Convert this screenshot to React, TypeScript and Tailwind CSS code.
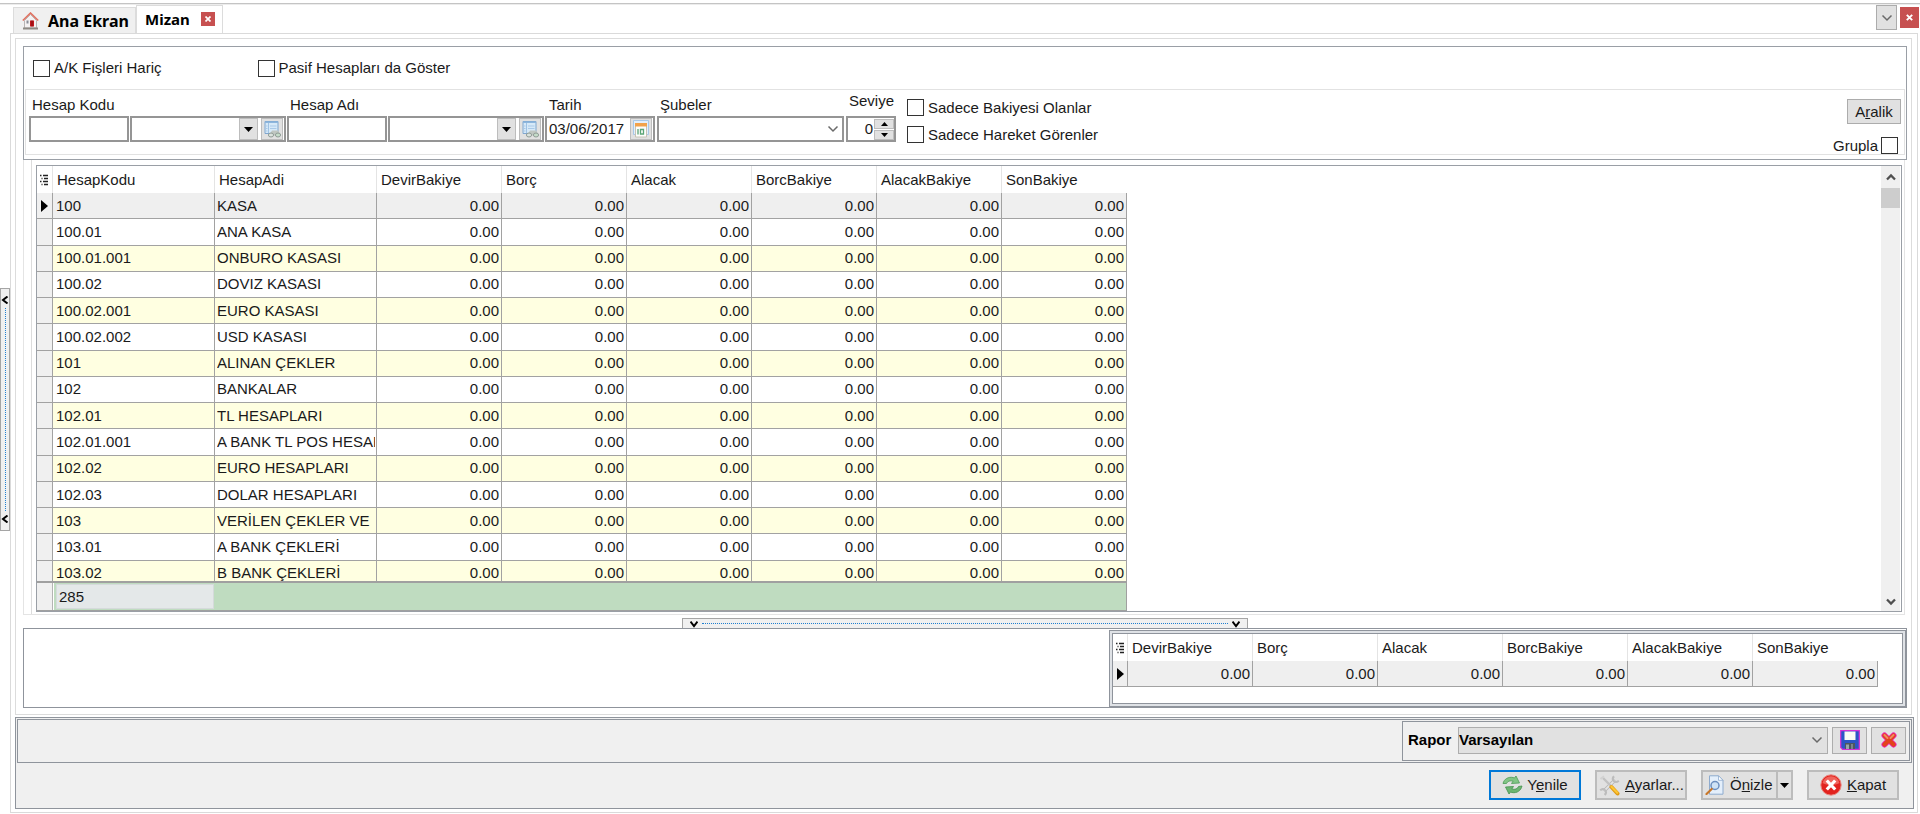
import React from "react";

const AMOUNTS = ["DevirBakiye", "Borç", "Alacak", "BorcBakiye", "AlacakBakiye", "SonBakiye"];

const ACCOUNTS: [string, string][] = [
  ["100", "KASA"],
  ["100.01", "ANA KASA"],
  ["100.01.001", "ONBURO KASASI"],
  ["100.02", "DOVIZ KASASI"],
  ["100.02.001", "EURO KASASI"],
  ["100.02.002", "USD KASASI"],
  ["101", "ALINAN ÇEKLER"],
  ["102", "BANKALAR"],
  ["102.01", "TL HESAPLARI"],
  ["102.01.001", "A BANK TL POS HESAB"],
  ["102.02", "EURO HESAPLARI"],
  ["102.03", "DOLAR HESAPLARI"],
  ["103", "VERİLEN ÇEKLER VE"],
  ["103.01", "A BANK ÇEKLERİ"],
  ["103.02", "B BANK ÇEKLERİ"],
];

function HomeIcon() {
  return (
    <svg width="17" height="18" viewBox="0 0 17 18" aria-hidden="true">
      <path d="M2.5 8.500 8.500 2.500l6 6V16h-12z" fill="#f4f1f1" stroke="#b9b4b4" strokeWidth="1" />
      <path d="M.8 8.500 8.500 1 16.200 8.500" fill="none" stroke="#e0705f" strokeWidth="1.600" />
      <path d="M8 8.500h4v6H8z" fill="#c4161c" />
      <path d="M10 8.500v6" stroke="#7d0d10" strokeWidth="1" />
      <path d="M4.500 8.500h2v3h-2z" fill="#8a8f98" />
      <path d="M1 16.500h15" stroke="#8f8a84" strokeWidth="2" />
    </svg>
  );
}

function Chevron() {
  return (
    <svg width="12" height="8" viewBox="0 0 12 8" aria-hidden="true">
      <path d="M1.500 1.500 6 6 10.500 1.500" fill="none" stroke="#6a6a6a" strokeWidth="1.500" />
    </svg>
  );
}

function ScrollArrow({ up = false }: { up?: boolean }) {
  return (
    <svg width="10" height="8" viewBox="0 0 10 8" aria-hidden="true">
      <path d={up ? "M1 6.500 5 2.500 9 6.500" : "M1 1.500 5 5.500 9 1.500"} fill="none" stroke="#505050" strokeWidth="2.300" />
    </svg>
  );
}

function Triangle({ up = false, small = false }: { up?: boolean; small?: boolean }) {
  return (
    <svg width={small ? 7 : 9} height={small ? 4 : 5} viewBox="0 0 9 5" aria-hidden="true">
      <path d={up ? "M0 5h9L4.500 0z" : "M0 0h9L4.500 5z"} fill="#000" />
    </svg>
  );
}

function RowPointer() {
  return (
    <svg className="mx-auto block" width="7" height="12" viewBox="0 0 7 12" aria-hidden="true">
      <path d="M0 0v12l7-6z" fill="#000" />
    </svg>
  );
}

function ColumnsIcon() {
  return (
    <svg className="mx-auto block" width="9" height="12" viewBox="0 0 9 12" aria-hidden="true">
      <path
        d="M0 1.500h1.500M3 1.500h5M1.500 4.500h1M4 4.500h4M0 7.500h1.500M3 7.500h5M1.500 10.500h1M4 10.500h4"
        stroke="#222"
        strokeWidth="1.400"
      />
    </svg>
  );
}

function LookupIcon() {
  return (
    <svg width="19" height="19" viewBox="0 0 19 19" aria-hidden="true">
      <path d="M2 1.500h13v12H2z" fill="#d6e9f8" stroke="#7fa6cf" />
      <path d="M2 1.500h13v1.500H2z" fill="#8db6dd" />
      <path d="M5.500 3v10" stroke="#9fc2e4" />
      <path d="M3 6h1.500M7 6h6.500M3 8.500h1.500M7 8.500h6.500M3 11h1.500" stroke="#a9c9e8" />
      <path d="M6 15.500 9 10.500h6l3 5z" fill="#bfc6c1" />
      <ellipse cx="8" cy="15" rx="2.600" ry="2" fill="#dbe2dd" stroke="#8f9b95" />
      <ellipse cx="15" cy="15" rx="2.600" ry="2" fill="#c4dcc9" stroke="#8f9b95" />
    </svg>
  );
}

function CalendarIcon() {
  return (
    <svg width="18" height="18" viewBox="0 0 18 18" aria-hidden="true">
      <path d="M1.500.500h15v14h-15z" fill="#e3effa" stroke="#a9c8e6" />
      <path d="M3.500 3.500h11v13.500h-11z" fill="#fdfdfb" stroke="#c6c3b6" />
      <path d="M3 3h12v3.500H3z" fill="#f2a24a" />
      <path d="M6 9v5.500M8.500 9.500h3v4.500h-3z" fill="none" stroke="#5aa577" strokeWidth="1.300" />
    </svg>
  );
}

function RefreshIcon() {
  return (
    <svg width="21" height="20" viewBox="0 0 21 20" aria-hidden="true">
      <path
        d="M1 8.500C2 4 6.500 1.500 11 2.500l1.500.5L14 1l3.500 7-8 .5 1.700-2.500C8 5.500 5.500 6 4.500 8.500z"
        fill="#82c585"
        stroke="#4c9a55"
        strokeWidth=".8"
      />
      <path
        d="M20 11c-1 4.500-5 7.500-10 6.500l-1.500-.5L7 19l-3.500-7 8-.5-1.700 2.500c3.200.8 5.700 0 6.700-2.500z"
        fill="#6cb571"
        stroke="#43904d"
        strokeWidth=".8"
      />
    </svg>
  );
}

function ToolsIcon() {
  return (
    <svg width="21" height="21" viewBox="0 0 21 21" aria-hidden="true">
      <path d="M16 5 5 16" stroke="#b4b4b4" strokeWidth="3.400" />
      <path d="M16 5 5 16" stroke="#e3e3e3" strokeWidth="1.800" />
      <path d="M15 1.200c-1.700 1.800-1.500 3.500-.2 4.800s3.300 1.300 5-.3" fill="none" stroke="#bcbcbc" strokeWidth="2" />
      <path d="M1.200 15.300c1.500-1.500 3.500-1.500 4.800-.2s1.200 3.300-.3 4.900" fill="none" stroke="#bcbcbc" strokeWidth="2" />
      <path d="M4 3 12 11" stroke="#c2c2c2" strokeWidth="2.400" />
      <path d="M1.500 4 5 1.200" stroke="#d2d2d2" strokeWidth="2" />
      <path d="m12.500 12 6 6.500" stroke="#e09a14" strokeWidth="4" strokeLinecap="round" />
      <path d="m12.500 11.700 5.800 6" stroke="#fcc636" strokeWidth="2.200" strokeLinecap="round" />
    </svg>
  );
}

function PreviewIcon() {
  return (
    <svg width="19" height="20" viewBox="0 0 19 20" aria-hidden="true">
      <path d="M4.500.800h9l4.500 4.500v13.900H4.500z" fill="#e4effb" stroke="#8eabce" />
      <path d="M13.500.800v4.500H18z" fill="#fff" stroke="#8eabce" strokeWidth=".8" />
      <circle cx="10" cy="10.500" r="4" fill="#cfe3f6" stroke="#6c8fbf" strokeWidth="1.500" />
      <path d="M6.700 14 1.500 19" stroke="#c8772a" strokeWidth="2.200" strokeLinecap="round" />
    </svg>
  );
}

function CloseIcon() {
  return (
    <svg width="22" height="22" viewBox="0 0 22 22" aria-hidden="true">
      <circle cx="11" cy="11" r="10.200" fill="#e2231f" stroke="#e98880" strokeWidth="1" />
      <path d="M2.500 9a8.700 8.700 0 0 1 17 0c-4 2.500-13 2.500-17 0z" fill="#f0645c" />
      <path d="m6.800 6.500 8.400 9M15.200 6.500l-8.400 9" stroke="#fff" strokeWidth="3.200" />
    </svg>
  );
}

function SaveIcon() {
  return (
    <svg width="20" height="20" viewBox="0 0 20 20" aria-hidden="true">
      <path d="M.7.700h18.600v18.600H2.500L.7 17.500z" fill="#2b55c6" stroke="#d42fd6" strokeWidth="1.200" />
      <path d="M4.500 1.500h11v8.500h-11z" fill="#fbfbf4" />
      <path d="M5 13h10v6H5z" fill="#4d565f" />
      <path d="M6 14.500h3V19H6z" fill="#9aa5ac" />
      <path d="M12 14v5" stroke="#8a959c" strokeWidth="1.500" />
    </svg>
  );
}

function DeleteIcon() {
  return (
    <svg width="16" height="16" viewBox="0 0 16 16" aria-hidden="true">
      <path d="m3.500 3.500 9 9M12.500 3.500l-9 9" stroke="#ee1fb0" strokeWidth="6" strokeLinecap="round" />
      <path d="m3.500 3.500 9 9M12.500 3.500l-9 9" stroke="#e2431c" strokeWidth="4.400" strokeLinecap="round" />
      <path d="m3.500 3 3 3M12.500 3l-3 3" stroke="#f08a62" strokeWidth="2" strokeLinecap="round" />
    </svg>
  );
}

const BOX = "size-[17px] shrink-0 appearance-none border border-[#333] bg-white checked:bg-[#333]";

function Check({ id, label, before = false }: { id: string; label: string; before?: boolean }) {
  return (
    <div className={before ? "flex flex-row-reverse items-center gap-[3px]" : "flex items-center gap-1"}>
      <input id={id} type="checkbox" className={BOX} />
      <label htmlFor={id} className="leading-4 whitespace-nowrap">
        {label}
      </label>
    </div>
  );
}

const FIELD = "flex h-[26px] items-center border-2 border-[#959595] bg-white";
const SMALL_BUTTON = "flex shrink-0 items-center justify-center border border-[#bdbdbd] bg-[#e1e1e1]";

function LookupField({ id, label }: { id: string; label: string }) {
  return (
    <div className="flex flex-col">
      <label htmlFor={id} className="pl-[3px] leading-[22px]">
        {label}
      </label>
      <div className="flex gap-px">
        <input id={id} type="text" className="h-[26px] w-[100px] border-2 border-[#959595] bg-white px-1" />
        <div className={`${FIELD} w-[156px] gap-[3px] pr-px`}>
          <input type="text" aria-label={`${label} seçimi`} className="min-w-0 flex-1 px-1 outline-none" />
          <button type="button" aria-label="Listeyi aç" className={`${SMALL_BUTTON} h-[22px] w-[19px]`}>
            <Triangle />
          </button>
          <button type="button" aria-label="Hesap ara" className={`${SMALL_BUTTON} size-[22px]`}>
            <LookupIcon />
          </button>
        </div>
      </div>
    </div>
  );
}

const HEAD = "h-[27px] border-r border-[#e4e4e4] px-1 pt-px pb-0 text-left font-normal";
const HEAD_LAST = "h-[27px] px-1 pt-px pb-0 text-left font-normal";
const CELL = "overflow-hidden border-r border-b border-[#a2a2a2] p-0 whitespace-nowrap";

function AmountHeads() {
  return (
    <>
      {AMOUNTS.map((name, i) => (
        <th key={name} className={i === AMOUNTS.length - 1 ? HEAD_LAST : HEAD}>
          {name}
        </th>
      ))}
    </>
  );
}

function AmountCells() {
  return (
    <>
      {AMOUNTS.map((name) => (
        <td key={name} className={`${CELL} pr-[2px] text-right`}>
          0.00
        </td>
      ))}
    </>
  );
}

function AccountGrid() {
  return (
    <table className="h-[421px] w-[1090px] table-fixed border-separate border-spacing-0">
      <colgroup>
        <col className="w-4" />
        <col className="w-[162px]" />
        <col className="w-[162px]" />
        {AMOUNTS.map((name) => (
          <col key={name} className="w-[125px]" />
        ))}
      </colgroup>
      <thead>
        <tr className="h-[27px]">
          <th className="h-[27px] border-r border-[#e4e4e4] p-0">
            <ColumnsIcon />
          </th>
          <th className={HEAD}>HesapKodu</th>
          <th className={HEAD}>HesapAdi</th>
          <AmountHeads />
        </tr>
      </thead>
      <tbody>
        {ACCOUNTS.map(([code, name], i) => (
          <tr key={code} className={i === 0 ? "bg-[#efefef]" : i % 2 === 0 ? "bg-[#ffffe1]" : "bg-white"}>
            <td className={`${CELL} bg-[#f0f0f0]`}>{i === 0 && <RowPointer />}</td>
            <td className={`${CELL} pl-[3px]`}>{code}</td>
            <td className={`${CELL} pl-[2px]`}>
              <div className="mr-px overflow-hidden">{name}</div>
            </td>
            <AmountCells />
          </tr>
        ))}
      </tbody>
    </table>
  );
}

function TotalsGrid() {
  return (
    <table className="w-[765px] table-fixed border-separate border-spacing-0">
      <colgroup>
        <col className="w-[15px]" />
        {AMOUNTS.map((name) => (
          <col key={name} className="w-[125px]" />
        ))}
      </colgroup>
      <thead>
        <tr>
          <th className="border-r border-[#e4e4e4] p-0">
            <ColumnsIcon />
          </th>
          <AmountHeads />
        </tr>
      </thead>
      <tbody>
        <tr className="h-[26px] bg-[#efefef]">
          <td className={CELL}>
            <RowPointer />
          </td>
          <AmountCells />
        </tr>
      </tbody>
    </table>
  );
}

function SplitArrow({ left = false }: { left?: boolean }) {
  return (
    <svg className="shrink-0" width="8" height="8" viewBox="0 0 8 8" aria-hidden="true">
      <path
        d={left ? "M6.500.500 2 4l4.500 3.500" : "M.500 1.500 4 6l3.500-4.500"}
        fill="none"
        stroke="#000"
        strokeWidth="2"
      />
    </svg>
  );
}

const ACTION = "flex h-[30px] w-[92px] items-center border-2 border-[#bcbcbc] bg-[#e1e1e1]";

export default function App() {
  return (
    <div className="flex h-screen min-h-[560px] flex-col bg-white pt-[3px] font-['Liberation_Sans',Arial,sans-serif] text-[15px] leading-[18px] text-[#1a1a1a]">
      <div className="h-[2px] shrink-0 border-t border-[#c4c4c4] bg-[#ececec]" />

      <div className="flex min-h-0 flex-1 pb-px">
        <aside className="w-[10px] shrink-0 pt-[283px]">
          <button
            type="button"
            aria-label="Sol paneli daralt"
            className="flex h-[243px] w-[10px] flex-col items-center justify-between border border-[#a5a5a5] bg-[#f0f0f0] py-[7px]"
          >
            <SplitArrow left />
            <span className="my-1 flex-1 border-l border-dotted border-[#1f7fd0]" />
            <SplitArrow left />
          </button>
        </aside>

        <div className="flex min-w-0 flex-1 flex-col">
          <header className="flex h-7 shrink-0 items-end pr-px pl-[3px] font-['Noto_Sans','Open_Sans',sans-serif] text-base font-bold text-black">
            <button
              type="button"
              className="flex h-[26px] w-[123px] items-center gap-[9px] border border-b-0 border-[#dcdcdc] bg-[#f0f0f0] pl-2 whitespace-nowrap"
            >
              <HomeIcon />
              Ana Ekran
            </button>
            <div className="flex h-7 w-[87px] items-center gap-[11px] border border-b-0 border-[#dcdcdc] bg-white pb-[2px] pl-2">
              <button type="button" className="text-[15px] leading-5">
                Mizan
              </button>
              <button
                type="button"
                aria-label="Sekmeyi kapat"
                className="flex size-[14px] items-center justify-center bg-[#c75050]"
              >
                <svg width="6" height="6" viewBox="0 0 6 6" aria-hidden="true">
                  <path d="m.5.500 5 5M5.500.500l-5 5" stroke="#fff" strokeWidth="1.700" />
                </svg>
              </button>
            </div>
            <div className="ml-auto flex h-7 items-start gap-[3px]">
              <button
                type="button"
                aria-label="Sekme listesi"
                className="flex h-[25px] w-[21px] items-center justify-center border border-[#acacac] bg-[#e1e1e1]"
              >
                <Chevron />
              </button>
              <button
                type="button"
                aria-label="Pencereyi kapat"
                className="mt-[2px] flex h-[21px] w-[19px] items-center justify-center bg-[#c75050]"
              >
                <svg width="7" height="7" viewBox="0 0 7 7" aria-hidden="true">
                  <path d="m.8.800 5.400 5.400M6.200.800.800 6.200" stroke="#fff" strokeWidth="1.900" />
                </svg>
              </button>
            </div>
          </header>

          <main className="mr-[2px] flex min-h-0 flex-1 flex-col border border-[#dadada] pt-1 pr-[3px] pb-[3px] pl-1">
            <div className="mr-[2px] flex min-h-0 flex-1 flex-col border border-[#dcdcdc] pt-[7px] pr-1 pb-[6px] pl-[7px]">
              <section className="shrink-0 border border-[#9a9fa6] px-px pb-1">
                <div className="flex h-[42px] items-center gap-24 pl-2">
                  <Check id="ak" label="A/K Fişleri Hariç" />
                  <Check id="pasif" label="Pasif Hesapları da Göster" />
                </div>
                <div className="flex items-start border border-[#e2e2e2] pr-[3px] pb-3 pl-[3px]">
                  <div className="flex gap-px pt-1">
                    <LookupField id="hesap-kodu" label="Hesap Kodu" />
                    <LookupField id="hesap-adi" label="Hesap Adı" />
                    <div className="flex flex-col">
                      <label htmlFor="tarih" className="pl-1 leading-[22px]">
                        Tarih
                      </label>
                      <div className={`${FIELD} w-[110px] pr-px`}>
                        <input
                          id="tarih"
                          type="text"
                          defaultValue="03/06/2017"
                          className="min-w-0 flex-1 pl-[2px] outline-none"
                        />
                        <button type="button" aria-label="Takvim" className={`${SMALL_BUTTON} size-[22px]`}>
                          <CalendarIcon />
                        </button>
                      </div>
                    </div>
                  </div>
                  <div className="flex flex-col pt-1 pl-[2px]">
                    <label htmlFor="subeler" className="pl-[3px] leading-[22px]">
                      Şubeler
                    </label>
                    <div className="grid items-center">
                      <select
                        id="subeler"
                        className="col-start-1 row-start-1 h-[26px] w-[187px] appearance-none border-2 border-[#959595] bg-white"
                      >
                        <option></option>
                      </select>
                      <span className="pointer-events-none col-start-1 row-start-1 mr-[5px] flex justify-self-end">
                        <Chevron />
                      </span>
                    </div>
                  </div>
                  <div className="flex flex-col pl-[2px]">
                    <label htmlFor="seviye" className="h-[26px] pl-[3px] leading-[22px]">
                      Seviye
                    </label>
                    <div className={`${FIELD} w-[50px]`}>
                      <input
                        id="seviye"
                        type="text"
                        defaultValue="0"
                        className="min-w-0 flex-1 pr-px text-right outline-none"
                      />
                      <div className="flex w-5 flex-col gap-px">
                        <button type="button" aria-label="Artır" className={`${SMALL_BUTTON} h-[10px]`}>
                          <Triangle up small />
                        </button>
                        <button type="button" aria-label="Azalt" className={`${SMALL_BUTTON} h-[10px]`}>
                          <Triangle small />
                        </button>
                      </div>
                    </div>
                  </div>
                  <div className="-mb-1 flex flex-col gap-[10px] pt-[9px] pl-[11px]">
                    <Check id="bakiye" label="Sadece Bakiyesi Olanlar" />
                    <Check id="hareket" label="Sadece Hareket Görenler" />
                  </div>
                  <div className="-mb-3 ml-auto flex flex-col items-end gap-[13px] pt-[9px]">
                    <button type="button" className="h-[25px] w-[54px] border border-[#acacac] bg-[#e1e1e1]">
                      A<span className="underline">r</span>alik
                    </button>
                    <div className="pr-[3px]">
                      <Check id="grupla" label="Grupla" before />
                    </div>
                  </div>
                </div>
              </section>

              <section className="mr-[2px] flex min-h-0 flex-1 border border-t-0 border-[#e4e4e4] pl-[7px]">
                <div className="flex min-h-0 flex-1 border-l border-[#dcdcdc] pt-[5px] pr-[2px] pb-[2px] pl-1">
                  <div className="flex min-h-0 min-w-0 flex-1 border border-[#9a9fa6]">
                    <div className="flex min-w-0 flex-1 flex-col">
                      <div className="min-h-0 flex-1 overflow-hidden">
                        <AccountGrid />
                      </div>
                      <div className="flex h-[30px] w-[1090px] shrink-0 border-t-2 border-r border-b border-[#a0a0a0]">
                        <div className="w-4 border-r border-[#b4b4b4] bg-[#f0f0f0]" />
                        <div className="ml-px flex flex-1 bg-[#bfdcc0] py-px pl-[2px]">
                          <div className="w-[158px] border border-[#d5dadb] bg-[#e4e8e9] pt-px pl-[2px] leading-[22px]">
                            285
                          </div>
                        </div>
                      </div>
                    </div>
                    <div className="mr-px flex w-[19px] flex-col items-center bg-[#f0f0f0]">
                      <div className="flex h-[22px] shrink-0 items-center">
                        <ScrollArrow up />
                      </div>
                      <div className="h-5 w-full bg-[#cdcdcd]" />
                      <div className="mt-auto flex h-[18px] shrink-0 items-center">
                        <ScrollArrow />
                      </div>
                    </div>
                  </div>
                </div>
              </section>

              <button
                type="button"
                aria-label="Alt paneli daralt"
                className="mt-[3px] flex h-[10px] w-[566px] shrink-0 items-center justify-between self-center border border-b-0 border-[#a5a5a5] bg-[#f0f0f0] px-[7px]"
              >
                <SplitArrow />
                <span className="mx-1 flex-1 border-t border-dotted border-[#1f7fd0]" />
                <SplitArrow />
              </button>

              <section className="flex h-20 shrink-0 justify-end border border-[#8f949c] pt-px">
                <div className="flex border border-[#8f949c] bg-[#dfe2e6] p-[2px]">
                  <div className="w-[791px] border border-[#8f949c] bg-white">
                    <TotalsGrid />
                  </div>
                </div>
              </section>
            </div>

            <footer className="mt-[2px] shrink-0 border border-[#8f949c] bg-[#f0f0f0] pt-px">
              <div className="mr-px ml-px flex justify-end border border-[#8f949c] p-px">
                <div className="flex h-10 items-center border border-[#8f949c] px-[3px] pb-[2px]">
                  <label htmlFor="rapor" className="w-[52px] pl-[2px] font-bold text-black">
                    Rapor
                  </label>
                  <div className="grid items-center">
                    <select
                      id="rapor"
                      className="col-start-1 row-start-1 h-[27px] w-[370px] appearance-none border border-[#adadad] bg-[#e1e1e1] px-0 font-bold text-black"
                    >
                      <option>Varsayılan</option>
                    </select>
                    <span className="pointer-events-none col-start-1 row-start-1 mr-[5px] flex justify-self-end">
                      <Chevron />
                    </span>
                  </div>
                  <button
                    type="button"
                    aria-label="Kaydet"
                    className="ml-1 flex h-[27px] w-[35px] items-center justify-center border border-[#adadad] bg-[#e1e1e1]"
                  >
                    <SaveIcon />
                  </button>
                  <button
                    type="button"
                    aria-label="Sil"
                    className="ml-1 flex h-[27px] w-[35px] items-center justify-center border border-[#adadad] bg-[#e1e1e1]"
                  >
                    <DeleteIcon />
                  </button>
                </div>
              </div>
              <div className="flex justify-end gap-[14px] pt-[7px] pr-[14px] pb-2">
                <button
                  type="button"
                  className="flex h-[30px] w-[92px] items-center justify-center gap-1 border-2 border-[#0078d7] bg-[#e1e1e1]"
                >
                  <RefreshIcon />
                  <span>
                    Y<span className="underline">e</span>nile
                  </span>
                </button>
                <button type="button" className={`${ACTION} gap-[5px] pl-[2px]`}>
                  <ToolsIcon />
                  <span>
                    <span className="underline">A</span>yarlar...
                  </span>
                </button>
                <div className={ACTION}>
                  <button type="button" className="flex h-full flex-1 items-center gap-[6px] pl-[2px]">
                    <PreviewIcon />
                    <span>
                      Ö<span className="underline">n</span>izle
                    </span>
                  </button>
                  <button
                    type="button"
                    aria-label="Önizleme seçenekleri"
                    className="flex h-full w-[15px] items-center justify-center border-l-2 border-[#bcbcbc]"
                  >
                    <Triangle />
                  </button>
                </div>
                <button type="button" className={`${ACTION} justify-center gap-[5px]`}>
                  <CloseIcon />
                  <span>
                    <span className="underline">K</span>apat
                  </span>
                </button>
              </div>
            </footer>
          </main>
        </div>
      </div>
    </div>
  );
}
